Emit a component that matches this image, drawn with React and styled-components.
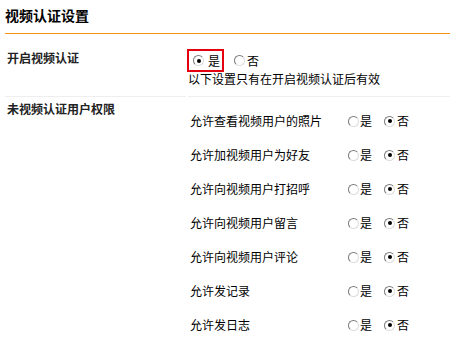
import React from "react";
import styled, { createGlobalStyle } from "styled-components";

const Global = createGlobalStyle`
  html, body { margin: 0; padding: 0; background: #fff; }
  body {
    font-family: "Noto Sans CJK SC", "Noto Sans", sans-serif;
    font-size: 12px;
    color: #000;
  }
`;

const Page = styled.div`
  margin-left: 5px;
  width: 445px;
`;

const Title = styled.h2`
  margin: 0;
  padding: 5px 0 8px;
  font-size: 14px;
  line-height: 20px;
  font-weight: bold;
  color: #000;
`;

const Rule = styled.hr`
  margin: 0;
  border: 0;
  height: 1px;
  background-color: rgb(243, 147, 17);
`;

const Grid = styled.div`
  display: grid;
  grid-template-columns: 181px 262px;
  column-gap: 2px;
`;

const Cell = styled.div`
  padding: ${(p) => p.$pad || "0"};
  border-bottom: ${(p) => (p.$line ? "1px solid #eeeeee" : "none")};
  line-height: 16px;
`;

const SectionLabel = styled.div`
  font-weight: bold;
  color: #222;
  padding-left: 2px;
  line-height: 16px;
`;

const OptionRow = styled.div`
  display: flex;
  align-items: center;
`;

const Highlight = styled.span`
  display: inline-flex;
  align-items: center;
  height: 19px;
  padding: 0 2px 0 4px;
  margin-left: -1px;
  border: 2px solid #e4000f;
`;

const Option = styled.label`
  display: inline-flex;
  align-items: center;
  gap: ${(p) => p.$gap || 2}px;
  margin-left: ${(p) => p.$ml || 0}px;
  cursor: pointer;
`;

const Radio = styled.input.attrs({ type: "radio" })`
  appearance: none;
  -webkit-appearance: none;
  margin: 0;
  width: 11px;
  height: 11px;
  border-radius: 50%;
  box-sizing: border-box;
  border: 1px solid;
  border-color: #7a7a7a #dcdcdc #dcdcdc #7a7a7a;
  background: #fff;
  position: relative;
  flex: none;
  &:checked::after {
    content: "";
    position: absolute;
    left: 2.5px;
    top: 2.5px;
    width: 4px;
    height: 4px;
    border-radius: 50%;
    background: #000;
  }
`;

const Note = styled.div`
  margin-top: -1px;
  line-height: 16px;
`;

const PermList = styled.div`
  display: flex;
  flex-direction: column;
`;

const PermRow = styled.div`
  display: grid;
  grid-template-columns: 158px auto;
  align-items: center;
  height: 34px;
`;

const PermName = styled.span`
  padding-left: 2px;
`;

const Choices = styled.span`
  display: inline-flex;
  align-items: center;
  padding-left: 2px;
`;

const perms = [
  "允许查看视频用户的照片",
  "允许加视频用户为好友",
  "允许向视频用户打招呼",
  "允许向视频用户留言",
  "允许向视频用户评论",
  "允许发记录",
  "允许发日志",
];

export default function App() {
  return (
    <>
      <Global />
      <Page>
        <Title>视频认证设置</Title>
        <Rule />
        <Grid>
          <Cell $line $pad="16px 0 0">
            <SectionLabel>开启视频认证</SectionLabel>
          </Cell>
          <Cell $line $pad="15px 0 9px">
            <OptionRow>
              <Highlight>
                <Option $gap={4}>
                  <Radio name="enable" defaultChecked />是
                </Option>
              </Highlight>
              <Option $ml={10} $gap={2}>
                <Radio name="enable" />否
              </Option>
            </OptionRow>
            <Note>以下设置只有在开启视频认证后有效</Note>
          </Cell>
          <Cell $pad="4px 0 0">
            <SectionLabel>未视频认证用户权限</SectionLabel>
          </Cell>
          <Cell $pad="7px 0 0">
            <PermList>
              {perms.map((p, i) => (
                <PermRow key={p}>
                  <PermName>{p}</PermName>
                  <Choices>
                    <Option $gap={1}>
                      <Radio name={"perm" + i} />是
                    </Option>
                    <Option $ml={12} $gap={2}>
                      <Radio name={"perm" + i} defaultChecked />否
                    </Option>
                  </Choices>
                </PermRow>
              ))}
            </PermList>
          </Cell>
        </Grid>
      </Page>
    </>
  );
}
